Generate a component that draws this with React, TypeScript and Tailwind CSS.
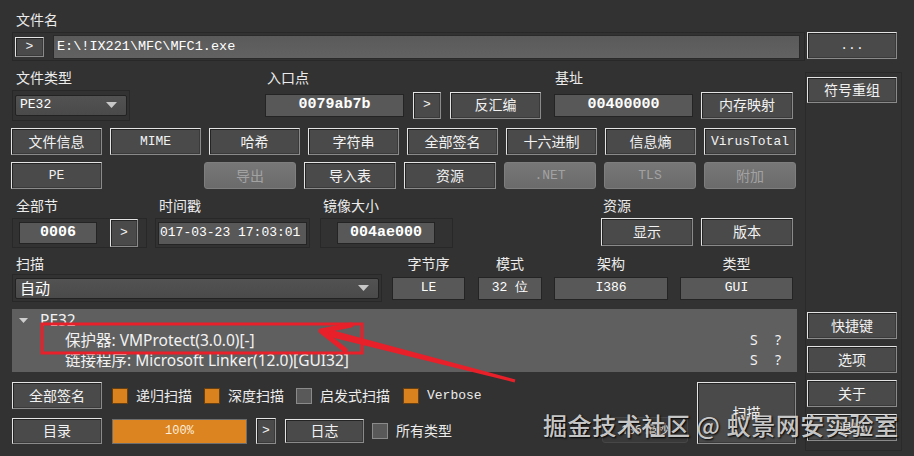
import React from 'react';

const MONO = "font-['Liberation_Mono','DejaVu_Sans_Mono',monospace]";

type BoxProps = { className?: string; children?: React.ReactNode };

// raised push button with the light top/left edge
const Btn: React.FC<BoxProps> = ({ className = '', children }) => (
  <div
    className={`flex shrink-0 items-center justify-center border border-t-[#e4e4e4] border-l-[#e4e4e4] border-r-[#8a8a8a] border-b-[#8a8a8a] bg-[#4a4a4a] text-[#f2f2f2] shadow-[inset_1px_1px_0_#242424,inset_-1px_-1px_0_#3a3a3a] ${className}`}
  >
    {children}
  </div>
);

const DisBtn: React.FC<BoxProps> = ({ className = '', children }) => (
  <div
    className={`flex shrink-0 items-center justify-center rounded-[3px] border border-[#7e7e7e] bg-linear-to-b from-[#777777] to-[#6b6b6b] text-[#a2a2a2] ${className}`}
  >
    {children}
  </div>
);

// sunken read-only value box
const Field: React.FC<BoxProps> = ({ className = '', children }) => (
  <div
    className={`flex shrink-0 items-center border border-[#242424] bg-[#585858] text-white ${className}`}
  >
    {children}
  </div>
);

const Frame: React.FC<BoxProps> = ({ className = '', children }) => (
  <div className={`flex shrink-0 items-center border border-[#282828] ${className}`}>{children}</div>
);

const Caret = () => (
  <svg width="11" height="6" viewBox="0 0 11 6">
    <polygon points="0,0 11,0 5.5,6" fill="#c8c8c8" />
  </svg>
);

const Combo: React.FC<BoxProps> = ({ className = '', children }) => (
  <div
    className={`flex shrink-0 items-center justify-between rounded-[2px] border border-[#222222] bg-linear-to-b from-[#525252] to-[#4a4a4a] pl-[4px] pr-[9px] text-white ${className}`}
  >
    {children}
    <Caret />
  </div>
);

const Check: React.FC<{ on?: boolean; className?: string }> = ({ on, className = '' }) => (
  <div
    className={`h-[16px] w-[16px] shrink-0 border ${
      on ? 'border-[#6a4010] bg-[#d9821e]' : 'border-[#8a8a8a] bg-[#595959]'
    } ${className}`}
  />
);

const toolRow1: { t: string; mono?: boolean; w: string }[] = [
  { t: '文件信息', w: 'w-[91px]' },
  { t: 'MIME', mono: true, w: 'w-[91px]' },
  { t: '哈希', w: 'w-[91px]' },
  { t: '字符串', w: 'w-[91px]' },
  { t: '全部签名', w: 'w-[91px]' },
  { t: '十六进制', w: 'w-[91px]' },
  { t: '信息熵', w: 'w-[91px]' },
  { t: 'VirusTotal', mono: true, w: 'w-[92px]' },
];

const infoFields = [
  { label: '字节序', value: 'LE', cls: 'w-[73px]' },
  { label: '模式', value: '32 位', cls: 'ml-[13px] w-[64px]' },
  { label: '架构', value: 'I386', cls: 'ml-[12px] w-[114px]' },
  { label: '类型', value: 'GUI', cls: 'ml-[12px] w-[113px]' },
];

const results = [
  '保护器: VMProtect(3.0.0)[-]',
  '链接程序: Microsoft Linker(12.0)[GUI32]',
];

export default function App() {
  return (
    <div className="relative flex h-[456px] w-[914px] overflow-hidden bg-[#323232] font-['Noto_Sans','Noto_Sans_CJK_SC',sans-serif] text-[14px] leading-[20px] text-[#ececec]">
      {/* main area */}
      <div className="flex w-[805px] shrink-0 flex-col pl-[11px]">
        <div className="h-[32px] pl-[5px] pt-[10px]">文件名</div>
        <Frame className="ml-[1px] h-[29px] w-[793px] pl-[2px]">
          <Btn className={`h-[20px] w-[29px] text-[13px] ${MONO}`}>&gt;</Btn>
          <div
            className={`ml-[9px] flex h-[24px] w-[747px] items-center border border-[#2a2a2a] bg-linear-to-b from-[#5a5a5a] to-[#626262] pl-[3px] text-[13.5px] text-white ${MONO}`}
          >
            {'E:\\!IX221\\MFC\\MFC1.exe'}
          </div>
        </Frame>

        {/* type / entry point / image base */}
        <div className="flex">
          <div className="w-[252px] shrink-0">
            <div className="h-[27px] pl-[5px] pt-[7px]">文件类型</div>
            <div className="flex h-[34px] items-center">
              <Frame className="ml-[1px] h-[31px] w-[118px] pl-[2px]">
                <Combo className={`h-[21px] w-[112px] text-[13px] ${MONO}`}>
                  <span>PE32</span>
                </Combo>
              </Frame>
            </div>
          </div>
          <div className="w-[288px] shrink-0">
            <div className="h-[27px] pl-[4px] pt-[7px]">入口点</div>
            <div className="flex h-[34px] items-center pl-[2px]">
              <Field className={`h-[23px] w-[139px] justify-center text-[15px] font-bold ${MONO}`}>0079ab7b</Field>
              <Btn className={`ml-[9px] h-[27px] w-[28px] text-[13px] ${MONO}`}>&gt;</Btn>
              <Btn className="ml-[9px] h-[27px] w-[91px]">反汇编</Btn>
            </div>
          </div>
          <div>
            <div className="h-[27px] pl-[4px] pt-[7px]">基址</div>
            <div className="flex h-[34px] items-center pl-[3px]">
              <Field className={`h-[23px] w-[139px] justify-center text-[15px] font-bold ${MONO}`}>00400000</Field>
              <Btn className="ml-[8px] h-[27px] w-[92px]">内存映射</Btn>
            </div>
          </div>
        </div>

        {/* tool buttons */}
        <div className="mt-[6px] flex gap-[8px]">
          {toolRow1.map((b) => (
            <Btn key={b.t} className={`h-[27px] ${b.w} ${b.mono ? `text-[13px] ${MONO}` : ''}`}>
              {b.t}
            </Btn>
          ))}
        </div>
        <div className="mt-[7px] flex">
          <Btn className={`h-[27px] w-[91px] text-[13px] ${MONO}`}>PE</Btn>
          <div className="ml-[102px] flex gap-[8px]">
            <DisBtn className="h-[27px] w-[92px]">导出</DisBtn>
            <Btn className="h-[27px] w-[92px]">导入表</Btn>
            <Btn className="h-[27px] w-[92px]">资源</Btn>
            <DisBtn className={`h-[27px] w-[92px] text-[13px] ${MONO}`}>.NET</DisBtn>
            <DisBtn className={`h-[27px] w-[92px] text-[13px] ${MONO}`}>TLS</DisBtn>
            <DisBtn className="h-[27px] w-[92px]">附加</DisBtn>
          </div>
        </div>

        {/* sections / timestamp / image size / resources */}
        <div className="flex">
          <div className="w-[144px] shrink-0">
            <div className="h-[29px] pl-[5px] pt-[7px]">全部节</div>
            <Frame className="ml-[1px] h-[30px] w-[135px] pl-[6px]">
              <Field className={`h-[22px] w-[78px] justify-center text-[15px] font-bold ${MONO}`}>0006</Field>
              <Btn className={`ml-[13px] h-[28px] w-[28px] text-[13px] ${MONO}`}>&gt;</Btn>
            </Frame>
          </div>
          <div className="w-[161px] shrink-0">
            <div className="h-[29px] pl-[4px] pt-[7px]">时间戳</div>
            <Frame className="h-[30px] w-[155px] pl-[2px]">
              <Field className={`h-[23px] w-[149px] overflow-hidden whitespace-nowrap pl-[1px] text-[13px] ${MONO}`}>
                017-03-23 17:03:01
              </Field>
            </Frame>
          </div>
          <div className="w-[281px] shrink-0">
            <div className="h-[29px] pl-[7px] pt-[7px]">镜像大小</div>
            <Frame className="ml-[4px] h-[30px] w-[133px] pl-[16px]">
              <Field className={`h-[22px] w-[98px] justify-center text-[15px] font-bold ${MONO}`}>004ae000</Field>
            </Frame>
          </div>
          <div>
            <div className="h-[29px] pl-[6px] pt-[7px]">资源</div>
            <div className="ml-[4px] flex gap-[8px]">
              <Btn className="h-[28px] w-[92px]">显示</Btn>
              <Btn className="h-[28px] w-[92px]">版本</Btn>
            </div>
          </div>
        </div>

        {/* scan mode + format info */}
        <div className="flex">
          <div className="w-[381px] shrink-0">
            <div className="h-[26px] pl-[5px] pt-[6px]">扫描</div>
            <Frame className="ml-[1px] h-[28px] w-[370px] pl-[2px]">
              <Combo className="h-[21px] w-[364px] text-[15px]">
                <span>自动</span>
              </Combo>
            </Frame>
          </div>
          {infoFields.map((f) => (
            <div key={f.label} className={`flex shrink-0 flex-col items-center ${f.cls}`}>
              <div className="h-[26px] pt-[6px]">{f.label}</div>
              <div className="flex h-[28px] w-full items-center">
                <Field className={`h-[23px] w-full justify-center bg-[#525252] text-[13px] ${MONO}`}>{f.value}</Field>
              </div>
            </div>
          ))}
        </div>

        {/* detection tree */}
        <div className="ml-[1px] mt-[7px] h-[63px] w-[785px] shrink-0 bg-[#5f5f5f] pt-[1px] text-[15.5px] text-[#f2f2f2]">
          <div className="flex h-[20px] items-center pl-[7px]">
            <svg width="9" height="5" viewBox="0 0 9 5">
              <polygon points="0,0 9,0 4.5,5" fill="#cfcfcf" />
            </svg>
            <span className="ml-[12px]">PE32</span>
          </div>
          {results.map((r) => (
            <div key={r} className="flex h-[20px] items-center justify-between pl-[53px] pr-[16px]">
              <span>{r}</span>
              <span className="flex w-[31px] justify-between text-[14px]">
                <span>S</span>
                <span>?</span>
              </span>
            </div>
          ))}
        </div>

        {/* bottom controls */}
        <div className="mt-[10px] flex">
          <div className="flex w-[591px] shrink-0 flex-col">
            <div className="flex h-[27px] items-center">
              <Btn className="ml-[1px] h-[27px] w-[90px]">全部签名</Btn>
              <Check on className="ml-[10px]" />
              <span className="ml-[8px]">递归扫描</span>
              <Check on className="ml-[12px]" />
              <span className="ml-[8px]">深度扫描</span>
              <Check className="ml-[12px]" />
              <span className="ml-[8px]">启发式扫描</span>
              <Check on className="ml-[13px]" />
              <span className={`ml-[8px] text-[13px] ${MONO}`}>Verbose</span>
            </div>
            <div className="mt-[9px] flex h-[26px] items-center">
              <Btn className="ml-[1px] h-[26px] w-[90px]">目录</Btn>
              <div
                className={`ml-[10px] flex h-[25px] w-[135px] items-center justify-center border border-[#6e6e6e] bg-[#dc841f] text-[12px] text-[#fbeedd] ${MONO}`}
              >
                100%
              </div>
              <Btn className={`ml-[9px] h-[26px] w-[20px] text-[13px] ${MONO}`}>&gt;</Btn>
              <Btn className="ml-[9px] h-[24px] w-[79px]">日志</Btn>
              <Check className="ml-[8px]" />
              <span className="ml-[8px]">所有类型</span>
            </div>
          </div>
          <div className="flex flex-col justify-end">
            <div className="mb-[1px] flex h-[26px] w-[86px] items-center justify-center rounded-[3px] border border-[#474747] bg-[#393939] text-[12px] text-[#e6e6e6]">
              136 毫秒
            </div>
          </div>
          <Btn className="ml-[9px] h-[62px] w-[99px]">扫描</Btn>
        </div>
      </div>

      {/* right-hand column */}
      <div className="flex flex-1 flex-col">
        <Btn className={`ml-[2px] mt-[32px] h-[27px] w-[90px] text-[13px] ${MONO}`}>...</Btn>
        <div className="mt-[13px] flex h-[379px] w-[97px] flex-col border border-[#2a2a2a] pl-[1px] pt-[4px]">
          <Btn className="h-[26px] w-[90px]">符号重组</Btn>
          <Btn className="mt-[209px] h-[27px] w-[90px]">快捷键</Btn>
          <Btn className="mt-[7px] h-[27px] w-[90px]">选项</Btn>
          <Btn className="mt-[7px] h-[27px] w-[90px]">关于</Btn>
          <Btn className="mt-[7px] h-[27px] w-[90px]">退出</Btn>
        </div>
      </div>

      {/* red markup over the result */}
      <svg className="pointer-events-none absolute left-0 top-0" width="914" height="456" viewBox="0 0 914 456">
        <rect x="42" y="324" width="320" height="29" fill="none" stroke="#e8202a" strokeWidth="3" />
        <polygon points="515.4,379.5 514.6,382.5 324.1,335.4 325.9,328.6" fill="#e8202a" />
        <polyline
          points="351,325 321,331 345,350"
          fill="none"
          stroke="#e8202a"
          strokeWidth="5"
          strokeLinejoin="round"
          strokeLinecap="round"
        />
      </svg>

      <div className="pointer-events-none absolute left-[543px] top-[409px] whitespace-nowrap font-['Noto_Sans_CJK_SC',sans-serif] text-[24px] font-medium leading-[32px] tracking-[0.6px] text-[#dedede]/90 [text-shadow:1px_1px_2px_#000]">
        掘金技术社区 @ 蚁景网安实验室
      </div>
    </div>
  );
}
